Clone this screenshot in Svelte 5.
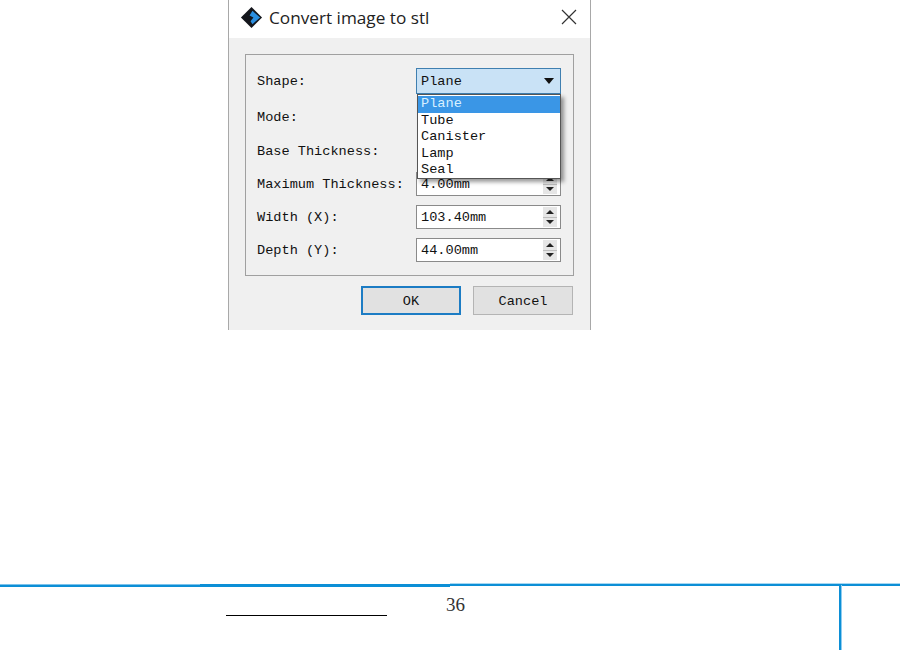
<script>
	const shapes = ["Plane", "Tube", "Canister", "Lamp", "Seal"];
	const spins = [
		{ label: "Maximum Thickness:", value: "4.00mm" },
		{ label: "Width (X):", value: "103.40mm" },
		{ label: "Depth (Y):", value: "44.00mm" },
	];
</script>

<div class="page">
	<div class="dialog">
		<div class="titlebar">
			<svg class="logo" width="23" height="23" viewBox="0 0 24 24">
				<path d="M12 1 L23 12 L12 23 L1 12 Z" fill="#14161c" />
				<path d="M13 5 L21 12 L13 19 L11 16 L14 12 L10 10 Z" fill="#2b8fe0" />
			</svg>
			<span class="title">Convert image to stl</span>
			<svg class="close" width="16" height="16" viewBox="0 0 16 16">
				<path d="M1 1 L15 15 M15 1 L1 15" stroke="#333" stroke-width="1.2" fill="none" />
			</svg>
		</div>
		<div class="body">
			<div class="group">
				<div class="row first">
					<span class="label">Shape:</span>
					<div class="combo">
						<span>Plane</span>
						<svg width="10" height="6" viewBox="0 0 10 6"><path d="M0 0 H10 L5 6 Z" fill="#111" /></svg>
					</div>
					<ul class="popup">
						{#each shapes as shape, i}
							<li class:selected={i === 0}>{shape}</li>
						{/each}
					</ul>
				</div>
				<div class="row mode">
					<span class="label">Mode:</span>
				</div>
				<div class="row">
					<span class="label">Base Thickness:</span>
				</div>
				{#each spins as spin}
					<div class="row">
						<span class="label">{spin.label}</span>
						<div class="spin">
							<span class="value">{spin.value}</span>
							<div class="arrows">
								<div class="arrow">
									<svg width="8" height="4" viewBox="0 0 8 4"><path d="M0 4 L4 0 L8 4 Z" fill="#222" /></svg>
								</div>
								<div class="arrow">
									<svg width="8" height="4" viewBox="0 0 8 4"><path d="M0 0 H8 L4 4 Z" fill="#222" /></svg>
								</div>
							</div>
						</div>
					</div>
				{/each}
			</div>
			<div class="buttons">
				<button class="ok">OK</button>
				<button>Cancel</button>
			</div>
		</div>
	</div>

	<div class="footer">
		<div class="rule">
			<span class="seg a"></span>
			<span class="seg b"></span>
			<span class="seg c"></span>
		</div>
		<div class="footer-main">
			<div class="link"></div>
			<span class="page-no">36</span>
			<div class="divider"></div>
		</div>
	</div>
</div>

<style>
	:global(body) {
		background: #fff;
	}

	.page {
		display: flex;
		flex-direction: column;
		width: 900px;
		height: 651px;
		overflow: hidden;
	}

	.dialog {
		box-sizing: border-box;
		width: 363px;
		height: 330px;
		margin-left: 228px;
		border-left: 1px solid #a8a8a8;
		border-right: 1px solid #a8a8a8;
		background: #f0f0f0;
		display: flex;
		flex-direction: column;
	}

	.titlebar {
		box-sizing: border-box;
		height: 38px;
		flex-shrink: 0;
		background: #fff;
		display: flex;
		align-items: center;
		padding: 0 13px 4px 11px;
		gap: 6px;
	}

	.title {
		font-family: "Open Sans", "Noto Sans", sans-serif;
		font-size: 17.2px;
		color: #222;
		flex: 1;
	}

	.body {
		padding: 16px 16px 0;
		display: flex;
		flex-direction: column;
	}

	.group {
		box-sizing: border-box;
		height: 222px;
		border: 1px solid #a0a0a0;
		padding: 13px 12px 0 11px;
		display: flex;
		flex-direction: column;
		gap: 9px;
	}

	.row {
		position: relative;
		height: 24px;
		display: flex;
		align-items: center;
		justify-content: space-between;
		font-family: "Liberation Mono", monospace;
		font-size: 13.6px;
		color: #111;
	}

	.row.first {
		height: 26px;
		margin-bottom: 2px;
	}

	.row.mode {
		margin-bottom: 1px;
	}

	.combo {
		box-sizing: border-box;
		width: 145px;
		height: 26px;
		border: 1px solid #3f7fb0;
		background: #c9e2f6;
		display: flex;
		align-items: center;
		justify-content: space-between;
		padding: 0 6px 0 4px;
	}

	.popup {
		position: absolute;
		top: 26px;
		right: 0;
		box-sizing: border-box;
		width: 144px;
		height: 85px;
		margin: 0;
		padding: 1px 0 0;
		list-style: none;
		background: #fff;
		border: 1px solid #555;
		box-shadow: 3px 3px 4px rgba(0, 0, 0, 0.4);
		z-index: 2;
	}

	.popup li {
		height: 16.6px;
		line-height: 16.6px;
		padding-left: 3px;
	}

	.popup li.selected {
		background: #3a96e6;
		color: #d8f0ff;
	}

	.spin {
		box-sizing: border-box;
		width: 145px;
		height: 24px;
		border: 1px solid #8a8a8a;
		background: #fff;
		display: flex;
		align-items: center;
		justify-content: space-between;
		padding: 0 3px 0 4px;
	}

	.arrows {
		box-sizing: border-box;
		width: 14px;
		height: 20px;
		background: #e6e6e6;
		display: flex;
		flex-direction: column;
	}

	.arrow {
		flex: 1;
		display: flex;
		align-items: center;
		justify-content: center;
	}

	.arrow + .arrow {
		border-top: 1px solid #bdbdbd;
	}

	.arrow svg {
		display: block;
	}

	.buttons {
		display: flex;
		justify-content: flex-end;
		gap: 12px;
		margin-top: 10px;
		padding-right: 1px;
	}

	button {
		box-sizing: border-box;
		width: 100px;
		height: 29px;
		padding: 1px 0 0;
		border: 1px solid #b4b4b4;
		background: #e1e1e1;
		font-family: "Liberation Mono", monospace;
		font-size: 13.6px;
		color: #111;
	}

	button.ok {
		border: 2px solid #1c7cc4;
	}

	.footer {
		margin-top: 253px;
		display: flex;
		flex-direction: column;
		flex: 1;
	}

	.rule {
		display: flex;
		height: 4px;
	}

	.seg {
		display: block;
	}

	.seg.a {
		width: 200px;
		margin-top: 1px;
		background: linear-gradient(#7cc3ec 1px, #0c8fd6 1px);
	}

	.seg.b {
		width: 250px;
		margin-top: 1px;
		background: #0c8fd6;
	}

	.seg.c {
		flex: 1;
		margin-bottom: 1px;
		background: linear-gradient(#a5d8f3 1px, #0c8fd6 1px);
	}

	.footer-main {
		flex: 1;
		display: flex;
		padding-bottom: 1px;
	}

	.link {
		width: 161px;
		height: 1px;
		margin: 28px 0 0 226px;
		background: #000;
	}

	.page-no {
		font-family: "Liberation Serif", serif;
		font-size: 19px;
		line-height: 20px;
		margin: 8px 0 0 59px;
		color: #333;
	}

	.divider {
		width: 3px;
		margin: -2px 0 0 373.5px;
		background: linear-gradient(90deg, #0c8fd6 66%, #8fcdf0 66%);
	}
</style>
